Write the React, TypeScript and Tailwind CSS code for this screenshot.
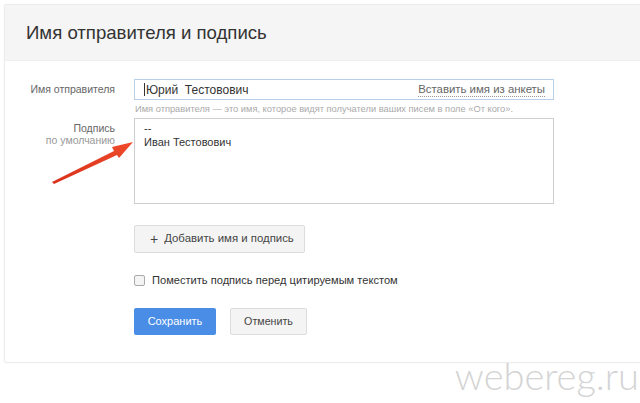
import React from "react";

const font = { fontFamily: '"Liberation Sans", Arial, sans-serif' };

function Arrow() {
  return (
    <svg className="absolute left-[48px] top-[136px]" width="92" height="52" viewBox="0 0 92 52">
      <defs>
        <linearGradient id="ar" x1="0" y1="1" x2="1" y2="0">
          <stop offset="0" stopColor="#d8321c" />
          <stop offset="1" stopColor="#ee4a2a" />
        </linearGradient>
      </defs>
      <path d="M4 46 L66 15 L64 11 L85 6 L71 22 L69 19 L6 48 Z" fill="url(#ar)" />
    </svg>
  );
}

export default function App() {
  return (
    <div className="relative w-[640px] h-[403px] bg-white overflow-hidden" style={font}>
      <div className="ml-[4px] mt-[4px] w-[650px] border border-[#ececec] rounded-[2px] shadow-[0_0_2px_rgba(0,0,0,0.05)]">
        <div className="h-[56px] bg-[#f5f5f5] flex items-center pl-[21px] text-[18.6px] text-[#333] border-b border-[#efefef]">
          Имя отправителя и подпись
        </div>
        <div className="pt-[18px] pb-[27px]">
          <div className="grid grid-cols-[129px_420px]">
            <div className="text-right pr-[19px] text-[10.5px] text-[#666] leading-[20px]">Имя отправителя</div>
            <div>
              <div className="h-[21px] border border-[#b7cfe9] flex items-center justify-between pl-[9px] pr-[8px] text-[12px] text-[#333]">
                <span className="flex items-center">
                  <span className="w-px h-[13px] bg-[#333] mr-[1px]" />
                  Юрий&nbsp; Тестовович
                </span>
                <span className="text-[#666] text-[11.4px] border-b border-dotted border-[#999] leading-[13px]">Вставить имя из анкеты</span>
              </div>
              <div className="text-[9.3px] text-[#aaa] mt-[3px] leading-[12px] pl-px">
                Имя отправителя — это имя, которое видят получатели ваших писем в поле «От кого».
              </div>
            </div>
          </div>

          <div className="grid grid-cols-[129px_420px] mt-[3px]">
            <div className="text-right pr-[19px] pt-[4px] text-[10.5px] leading-[12px]">
              <div className="text-[#666]">Подпись</div>
              <div className="text-[#999]">по умолчанию</div>
            </div>
            <div className="h-[86px] border border-[#cfcfcf] pl-[9px] pt-[2px] text-[11px] text-[#333] leading-[14px]">
              <div>--</div>
              <div>Иван Тестовович</div>
            </div>
          </div>

          <div className="ml-[129px] mt-[21px] w-[171px] h-[28px] bg-[#f4f4f4] border border-[#dcdcdc] rounded-[2px] flex items-center pl-[15px] text-[11.4px] text-[#444]">
            <span className="mr-[6px] text-[14px] leading-none">+</span>Добавить имя и подпись
          </div>

          <label className="ml-[129px] mt-[20px] flex items-center gap-[7px] text-[11.1px] leading-[14px] text-[#333]">
            <span className="w-[11px] h-[11px] border border-[#aaa] rounded-[2px] bg-[#f4f4f4]" />
            Поместить подпись перед цитируемым текстом
          </label>

          <div className="ml-[129px] mt-[21px] flex gap-[14px]">
            <div className="w-[82px] h-[27px] bg-[#4a8de6] rounded-[2px] text-white text-[11px] flex items-center justify-center">
              Сохранить
            </div>
            <div className="w-[77px] h-[27px] bg-[#f4f4f4] border border-[#dcdcdc] rounded-[2px] text-[#444] text-[10.7px] flex items-center justify-center">
              Отменить
            </div>
          </div>
        </div>
      </div>

      <div
        className="absolute right-[1px] top-[349px] text-[38px] leading-[52px] text-[#d4d4d4] font-light"
        style={{ fontFamily: 'Lato, "DejaVu Sans", sans-serif' }}
      >
        webereg.ru
      </div>

      <Arrow />
    </div>
  );
}
